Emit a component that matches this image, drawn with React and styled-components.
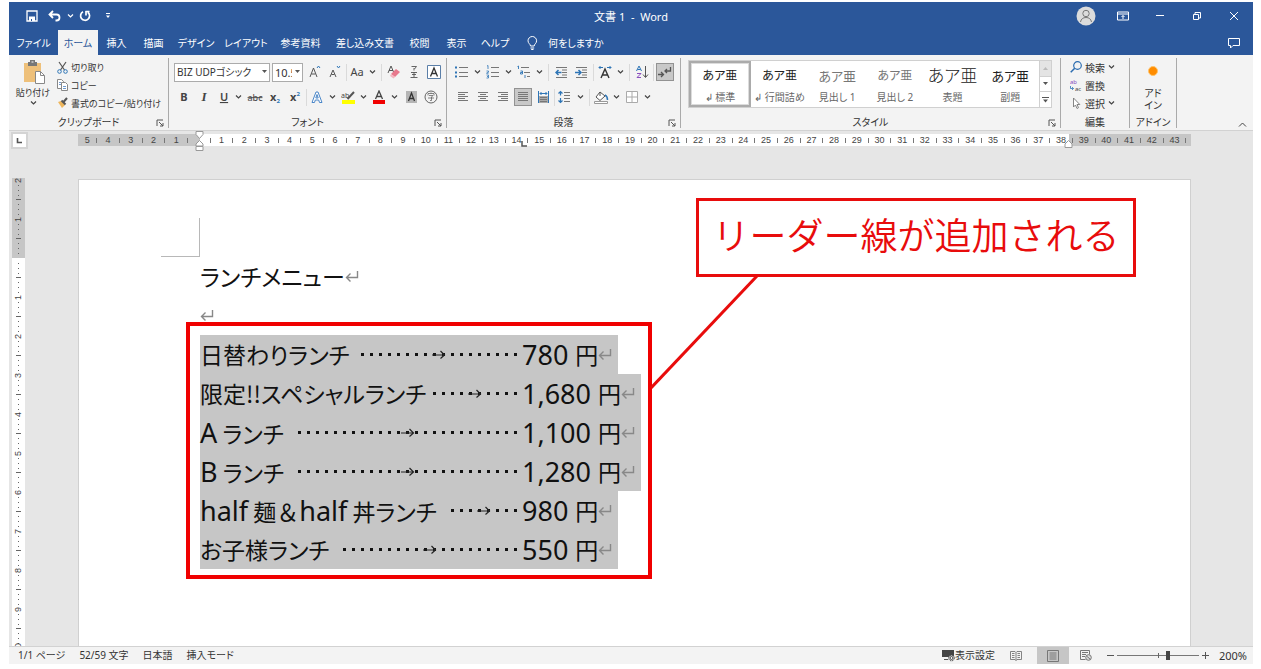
// src/App.jsx
import React from 'react';
import styled, { createGlobalStyle, css } from 'styled-components';

const GlobalStyle = createGlobalStyle`
  * {
    box-sizing: border-box;
  }

  body {
    margin: 0;
    background: #fff;
    color: #333;
    font-family: 'Noto Sans', 'Noto Sans CJK JP', sans-serif;
    font-size: 10px;
    font-feature-settings: 'palt';
  }

  button, select, input {
    font: inherit;
    font-feature-settings: inherit;
    color: inherit;
  }

  button {
    padding: 0;
    border: 0;
    background: none;
  }

  svg {
    display: block;
    flex: none;
  }
`;

/* Window */
const Window = styled.div`
  height: 100vh;
  padding: 2px 8px 5px 9px;
  display: flex;
  flex-direction: column;
`;

const TitleBar = styled.header`
  height: 28px;
  flex: none;
  display: grid;
  grid-template-columns: 1fr auto 1fr;
  align-items: center;
  background: #2b579a;
  color: #fff;
`;

const QuickAccess = styled.div`
  display: flex;
  align-items: center;
  padding-left: 14px;
`;

const QuickButton = styled.button`
  width: ${(p) => p.$w || 18}px;
  height: 20px;
  display: flex;
  align-items: center;
  justify-content: center;
`;

const DocTitle = styled.h1`
  margin: 0;
  font-size: 11px;
  font-weight: 400;
  white-space: pre;
`;

const WindowButtons = styled.div`
  display: flex;
  justify-content: flex-end;
  align-items: center;
  padding-right: 1px;
`;

const WindowButton = styled.button`
  width: 37px;
  height: 24px;
  display: flex;
  align-items: center;
  justify-content: center;
`;

/* Tabs */
const TabBar = styled.nav`
  height: 25px;
  flex: none;
  display: flex;
  background: #2b579a;
  color: #fff;
`;

const Tab = styled.button`
  width: ${(p) => p.$w}px;
  white-space: nowrap;
  text-align: center;
  ${(p) =>
    p.$active &&
    css`
      background: #f3f3f3;
      color: #2b579a;
    `}
`;

const TellMe = styled.button`
  display: flex;
  align-items: center;
  gap: 10px;
  margin-left: 12px;
`;

const CommentButton = styled.button`
  margin-left: auto;
  padding-right: 13px;
`;

/* Ribbon */
const RibbonBar = styled.div`
  height: 76px;
  flex: none;
  display: flex;
  padding: 3px 0 2px;
  background: #f3f3f3;
  border-bottom: 1px solid #d2d2d2;
`;

const Group = styled.section`
  width: ${(p) => p.$w}px;
  ${(p) => p.$grow && 'flex: 1;'}
  min-width: 0;
  display: flex;
  flex-direction: column;
  border-right: 1px solid #aaa;
`;

const GroupBody = styled.div`
  flex: 1;
  display: flex;
  flex-direction: ${(p) => (p.$column ? 'column' : 'row')};
  gap: ${(p) => p.$gap || 0}px;
  padding: ${(p) => p.$pad || '0'};
`;

const GroupFooter = styled.div`
  height: 11px;
  display: grid;
  grid-template-columns: ${(p) => (p.$launcher ? '12px 1fr 12px' : '1fr')};
  align-items: center;
  text-align: center;
  line-height: 11px;
  white-space: nowrap;
`;

const Launcher = styled.button`
  display: flex;
`;

const ToolRow = styled.div`
  height: 18px;
  display: flex;
  align-items: center;
`;

const Tool = styled.button`
  width: ${(p) => (p.$split ? 31 : 20)}px;
  height: 18px;
  display: flex;
  align-items: center;
  justify-content: ${(p) => (p.$split ? 'space-between' : 'center')};
  padding: ${(p) => (p.$split ? '0 3px 0 2px' : '0')};
  ${(p) =>
    p.$pressed &&
    css`
      width: 18px;
      margin: 0 1px;
      background: #c8c8c8;
      border: 1px solid #929292;
    `}
`;

const Divider = styled.span`
  width: 1px;
  height: 17px;
  margin: 0 ${(p) => p.$space || 1}px;
  background: #dadada;
`;

const Combo = styled.div`
  position: relative;
  width: ${(p) => p.$w}px;
  height: 19px;
  margin-right: 2px;

  select {
    width: 100%;
    height: 100%;
    padding: 0 10px 0 2px;
    border: 1px solid #ababab;
    border-radius: 0;
    background: #fff;
    font-size: ${(p) => p.$size}px;
    appearance: none;
  }

  svg {
    position: absolute;
    right: 3px;
    top: 7px;
    pointer-events: none;
  }
`;

const PasteButton = styled.button`
  width: 48px;
  display: flex;
  flex-direction: column;
  align-items: center;
  white-space: nowrap;
  font-size: 9px;
  line-height: 15px;
`;

const CommandList = styled.div`
  display: flex;
  flex-direction: column;
  font-size: ${(p) => p.$size || 10}px;
`;

const Command = styled.button`
  height: 18px;
  display: flex;
  align-items: center;
  gap: 3px;
  white-space: nowrap;
`;

const AddInButton = styled.button`
  flex: 1;
  display: flex;
  flex-direction: column;
  align-items: center;
  padding-top: 8px;
  line-height: 12px;
`;

const AddInDot = styled.span`
  width: 10px;
  height: 10px;
  margin-bottom: 11px;
  border: 1px solid #ffc46b;
  border-radius: 50%;
  background: #ff8c00;
`;

const CollapseButton = styled.button`
  width: 76px;
  display: flex;
  align-items: flex-end;
  justify-content: flex-end;
  padding: 0 6px 0 0;
`;

/* Style gallery */
const Gallery = styled.div`
  flex: 1;
  height: 48px;
  display: flex;
  border: 1px solid #d0d0d0;
  background: #fff;
`;

const StyleCard = styled.button`
  flex: 1;
  min-width: 0;
  display: flex;
  flex-direction: column;
  align-items: center;
  justify-content: space-between;
  padding: 4px 0 3px;
  white-space: nowrap;
  color: #666;
  ${(p) =>
    p.$selected &&
    css`
      padding: 2px 0 1px;
      border: 2px solid #ababab;
      box-shadow: inset 0 0 0 1px #dcdcdc;
    `}
`;

const Preview = styled.span`
  height: 22px;
  font-size: ${(p) => p.$size}px;
  font-weight: ${(p) => (p.$light ? 300 : 400)};
  line-height: 22px;
  color: ${(p) => p.$color || '#222'};
`;

const GalleryScroll = styled.div`
  width: 12px;
  display: flex;
  flex-direction: column;
  border-left: 1px solid #d0d0d0;

  button {
    flex: 1;
    display: flex;
    align-items: center;
    justify-content: center;
    border-bottom: 1px solid #d0d0d0;
  }

  button:first-child {
    background: #e4e4e4;
  }

  button:last-child {
    border-bottom: 0;
  }
`;

/* Workspace */
const Workspace = styled.main`
  flex: 1;
  min-height: 0;
  display: flex;
  flex-direction: column;
  background: #e6e6e6;
`;

const RulerRow = styled.div`
  height: 47px;
  flex: none;
  display: flex;
  align-items: flex-start;
  padding: 1px 62px 0 2px;
`;

const TabSelector = styled.button`
  width: 17px;
  height: 17px;
  display: flex;
  align-items: center;
  justify-content: center;
  border: 2px solid #d4d4d4;
  background: #fff;
`;

const HRuler = styled.div`
  position: relative;
  flex: 1;
  height: 12px;
  display: flex;
  margin: 2px 0 0 50px;
  padding-right: 5px;
  background: linear-gradient(to right, #c6c6c6 11%, #fff 11% 89%, #c6c6c6 89%);
  font: 9px/12px 'Liberation Sans', sans-serif;
  color: #444;
`;

const HCell = styled.span`
  flex: ${(p) => (p.$first ? 0.85 : 1)} 1 0;
  min-width: 0;
  display: flex;
  align-items: center;
  justify-content: flex-end;

  span {
    flex: 1;
    text-align: center;
  }

  &::after {
    content: '';
    width: 1px;
    height: 5px;
    background: #777;
  }
`;

const RulerMarker = styled.span`
  position: absolute;
  top: ${(p) => p.$top}px;
  left: ${(p) => p.$left};
`;

const Canvas = styled.div`
  flex: 1;
  min-height: 0;
  display: flex;
  overflow: hidden;
  padding: 0 62px 0 3px;
`;

const VRuler = styled.div`
  width: 13px;
  flex: none;
  margin-right: 53px;
  overflow: hidden;
  background: linear-gradient(to bottom, #c6c6c6 80px, #fff 80px);
  font: 9px/13px 'Liberation Sans', sans-serif;
  color: #444;
`;

const VCell = styled.div`
  height: 39px;
  display: flex;
  flex-direction: column;
`;

const VMark = styled.span`
  flex: 1;
  min-height: 0;
  display: flex;
  align-items: center;
  justify-content: center;

  b {
    font-weight: 400;
    writing-mode: vertical-rl;
    transform: rotate(180deg);
  }

  i {
    width: ${(p) => (p.$long ? 5 : 1)}px;
    height: 1px;
    background: #666;
  }
`;

const Page = styled.article`
  position: relative;
  flex: 1;
  min-width: 0;
  margin-top: 1px;
  padding: 77px 0 0 121px;
  border: 1px solid #d0d0d0;
  border-bottom: 0;
  background: #fff;
  color: #111;
  font-family: 'Noto Sans CJK JP', sans-serif;
  font-size: 23px;
`;

const MarginCorner = styled.span`
  position: absolute;
  top: 38px;
  left: 82px;
  width: 39px;
  height: 39px;
  border-right: 1px solid #b8b8b8;
  border-bottom: 1px solid #b8b8b8;
`;

const Paragraph = styled.p`
  width: fit-content;
  height: 39px;
  margin: 0;
  display: flex;
  align-items: center;
  line-height: 39px;
  white-space: nowrap;
  ${(p) => p.$selected && 'padding-right: 6px; background: #c6c6c6;'}
`;

const TabbedText = styled.span`
  width: 322px;
  display: flex;
  align-items: center;
  justify-content: space-between;
`;

const Latin = styled.span`
  font-family: 'Noto Sans', sans-serif;
  font-size: 27px;
`;

const FullWidth = styled.span`
  font-feature-settings: normal;
`;

const Leader = styled.span`
  width: ${(p) => p.$dots * 9}px;
  height: 9px;
  margin-right: 2px;
  display: flex;
  align-items: center;
  justify-content: center;
  background: radial-gradient(circle, #111 0 1.5px, transparent 2px) 0 0 / 9px 9px;
`;

const Price = styled.span`
  display: flex;
  gap: 7px;
`;

/* Annotations over the page */
const Highlight = styled.div`
  position: absolute;
  top: 142px;
  left: 107px;
  width: 466px;
  height: 257px;
  border: 4px solid #f00000;
`;

const Callout = styled.div`
  position: absolute;
  top: 18px;
  left: 617px;
  width: 440px;
  height: 79px;
  border: 3px solid #e80c0c;
  background: #fff;
  color: #e80c0c;
  font-size: 37px;
  font-weight: 350;
  font-feature-settings: normal;
  line-height: 67px;
  text-align: center;
  white-space: nowrap;
`;

const Connector = styled.svg`
  position: absolute;
  top: 96px;
  left: 571px;
`;

/* Status bar */
const StatusBar = styled.footer`
  height: 18px;
  flex: none;
  display: flex;
  align-items: center;
  justify-content: space-between;
  padding: 0 6px 0 9px;
  border-top: 1px solid #d2d2d2;
  background: #f3f3f3;
  line-height: 17px;
`;

const StatusItems = styled.div`
  height: 100%;
  display: flex;
  align-items: center;
  gap: ${(p) => p.$gap || 0}px;
`;

const StatusButton = styled.button`
  height: 100%;
  display: flex;
  align-items: center;
  justify-content: center;
  width: ${(p) => (p.$w ? `${p.$w}px` : 'auto')};
  white-space: nowrap;
  ${(p) => p.$active && 'background: #c6c6c6;'}
`;

const ZoomSlider = styled.input`
  width: 82px;
  height: 14px;
  margin: 0;
  appearance: none;
  background:
    linear-gradient(#666, #666) 41px 50% / 1px 5px no-repeat,
    linear-gradient(#777, #777) 0 50% / 100% 1px no-repeat;

  &::-webkit-slider-thumb {
    appearance: none;
    width: 4px;
    height: 9px;
    background: #444;
  }
`;

const ZoomLevel = styled.output`
  width: 36px;
  text-align: right;
  font-size: 11px;
`;

/* Icons */
const Icon = ({ w = 14, h = w, children }) => (
  <svg width={w} height={h} viewBox={`0 0 ${w} ${h}`} fill="none" stroke="#555" aria-hidden="true">
    {children}
  </svg>
);

const Chevron = ({ color = '#444' }) => (
  <Icon w={7} h={6}>
    <path d="M1 1.500L3.500 4 6 1.500" stroke={color} strokeWidth="1.200" />
  </Icon>
);

const Caret = () => (
  <Icon w={5} h={4}>
    <path d="M0 0h5L2.500 3z" fill="#555" stroke="none" />
  </Icon>
);

const Glyph = ({ children, w = 14, size = 12, ...rest }) => (
  <Icon w={w} h={14}>
    <text
      x={w / 2}
      y="11"
      textAnchor="middle"
      fontSize={size}
      fontFamily="Noto Sans, Noto Sans CJK JP, sans-serif"
      fill="#444"
      stroke="none"
      {...rest}
    >
      {children}
    </text>
  </Icon>
);

const LauncherIcon = () => (
  <Icon w={8} h={8}>
    <path d="M1 7V1h6M3 3l4 4M7 4v3H4" stroke="#555" />
  </Icon>
);

const LinesIcon = ({ rows }) => (
  <Icon w={12} h={12}>
    {rows.map(([x1, x2], i) => (
      <path key={i} d={`M${x1} ${1.5 + i * 2}H${x2}`} stroke="#777" />
    ))}
  </Icon>
);

const BulletsIcon = () => (
  <Icon>
    <path d="M4 2.500h9M4 7.500h9M4 11.500h9" stroke="#777" />
    <path d="M0 2.500h2M0 7.500h2M0 11.500h2" stroke="#2e75b6" strokeWidth="2" />
  </Icon>
);

const NumberingIcon = () => (
  <Icon>
    <path d="M5 2.500h8M5 7.500h8M5 11.500h8" stroke="#777" />
    <path d="M1 1l1-.5V4M.5 6h2v1.200l-2 1h2M.5 10h2v3h-2M1 11.500h1" stroke="#2e75b6" strokeWidth=".8" />
  </Icon>
);

const MultilevelIcon = () => (
  <Icon>
    <path d="M4 2.500h8M7 7.500h6M10 11.500h3" stroke="#777" />
    <path d="M.5 1.500l1-.5V4M3.500 6h2v3h-2V7.500h2M8 10v3" stroke="#2e75b6" strokeWidth=".9" />
  </Icon>
);

const IndentIcon = ({ out }) => (
  <Icon w={13} h={13}>
    <path d="M1 1.500h11M7 4h5M7 6.500h5M7 9h5M1 11.500h11" stroke="#777" />
    <path d={out ? 'M6.500 6.500H1M3.500 4L1 6.500 3.500 9' : 'M0 6.500h5.500M3.500 4L6 6.500 3.500 9'} stroke="#2e75b6" strokeWidth="1.500" />
  </Icon>
);

const ReturnMark = () => (
  <Icon w={14} h={14}>
    <path d="M12.500 1v6.500H1.500M5.500 3.500l-4 4 4 4" stroke="#888" strokeWidth="1.400" />
  </Icon>
);

const TabArrow = () => (
  <Icon w={14} h={9}>
    <path d="M0 5h12.500M8.500 1l4 4-4 3.500" stroke="#222" strokeWidth="1.200" />
  </Icon>
);

/* Data */
const tabs = [
  { label: 'ファイル', w: 49 },
  { label: 'ホーム', w: 40, active: true },
  { label: '挿入', w: 37 },
  { label: '描画', w: 37 },
  { label: 'デザイン', w: 48 },
  { label: 'レイアウト', w: 52 },
  { label: '参考資料', w: 57 },
  { label: '差し込み文書', w: 72 },
  { label: '校閲', w: 37 },
  { label: '表示', w: 37 },
  { label: 'ヘルプ', w: 40 },
];

const styles = [
  { name: '↲ 標準', size: 12, selected: true },
  { name: '↲ 行間詰め', size: 12 },
  { name: '見出し 1', size: 13, color: '#777' },
  { name: '見出し 2', size: 12, color: '#777' },
  { name: '表題', size: 17, light: true },
  { name: '副題', size: 13 },
];

const menu = [
  { name: '日替わりランチ', dots: 18, price: '780' },
  { name: '限定!!スペシャルランチ', dots: 10, price: '1,680' },
  { name: <><Latin>A</Latin> ランチ</>, dots: 25, price: '1,100' },
  { name: <><Latin>B</Latin> ランチ</>, dots: 25, price: '1,280' },
  { name: <><Latin>half</Latin> 麺<FullWidth>＆</FullWidth><Latin>half</Latin> 丼ランチ</>, dots: 8, price: '980' },
  { name: 'お子様ランチ', dots: 20, price: '550' },
];

const hNumbers = Array.from({ length: 49 }, (_, i) => i - 5);
const vNumbers = [2, 1, '', 1, 2, 3, 4, 5, 6, 7, 8, 9, 10];

const Footer = ({ label, launcher }) => (
  <GroupFooter $launcher={launcher}>
    {launcher && <span />}
    <span>{label}</span>
    {launcher && (
      <Launcher aria-label={label}>
        <LauncherIcon />
      </Launcher>
    )}
  </GroupFooter>
);

const Split = ({ label, children }) => (
  <Tool $split aria-label={label}>
    {children}
    <Chevron />
  </Tool>
);

const ClipboardGroup = () => (
  <Group $w={160}>
    <GroupBody>
      <PasteButton>
        <Icon w={24} h={27}>
          <path d="M3 5h17v19H3z" fill="#eec07a" stroke="none" />
          <path d="M7 4h2V2h5v2h2v4H7z" fill="#777" stroke="none" />
          <path d="M10.500 4h2" stroke="#fff" />
          <path d="M14.500 13.500h5l4 4v8h-9z" fill="#fff" stroke="#888" />
          <path d="M19.500 13.500v4h4" stroke="#888" />
        </Icon>
        <span>貼り付け</span>
        <Chevron />
      </PasteButton>
      <CommandList $size={9}>
        <Command>
          <Icon w={11} h={13}>
            <path d="M2 1l5.500 8M9 1L3.500 9" stroke="#555" strokeWidth="1.200" />
            <circle cx="2.500" cy="10.500" r="1.800" stroke="#2e75b6" />
            <circle cx="8.500" cy="10.500" r="1.800" stroke="#2e75b6" />
          </Icon>
          切り取り
        </Command>
        <Command>
          <Icon w={11} h={12}>
            <path d="M.5.500h4l2 2v7h-6z" fill="#fff" stroke="#888" />
            <path d="M4.500 3.500h4l2 2v6h-6z" fill="#fff" stroke="#888" />
            <path d="M6 7.500h3M6 9.500h3M2 3.500h2M2 5.500h2" stroke="#6f9bd1" />
          </Icon>
          コピー
        </Command>
        <Command>
          <Icon w={11} h={12}>
            <path d="M1 5l3-1 4 4-3 3z" fill="#eeb65c" stroke="none" />
            <path d="M4.500 3.500l4 4" stroke="#555" strokeWidth="2" />
            <path d="M6.500 5l3.500-4" stroke="#555" strokeWidth="2" />
          </Icon>
          書式のコピー/貼り付け
        </Command>
      </CommandList>
    </GroupBody>
    <Footer label="クリップボード" launcher />
  </Group>
);

const FontGroup = () => (
  <Group $w={278}>
    <GroupBody $column $gap={7} $pad="5px 0 0 5px">
      <ToolRow>
        <Combo $w={96} $size={10}>
          <select aria-label="フォント">
            <option>BIZ UDPゴシック</option>
          </select>
          <Caret />
        </Combo>
        <Combo $w={31} $size={11}>
          <select aria-label="フォント サイズ">
            <option>10.5</option>
          </select>
          <Caret />
        </Combo>
        <Tool aria-label="拡大">
          <Icon>
            <path d="M2 12l3.500-9L9 12M3.500 9h4" />
            <path d="M9 3l1.500-2L12 3" stroke="#2e75b6" />
          </Icon>
        </Tool>
        <Tool aria-label="縮小">
          <Icon>
            <path d="M2 12l3-7 3 7M3.500 9.500h3" />
            <path d="M9 1l1.500 2L12 1" stroke="#2e75b6" />
          </Icon>
        </Tool>
        <Divider />
        <Split label="文字種の変換">
          <Glyph size={11}>Aa</Glyph>
        </Split>
        <Divider $space={2} />
        <Tool aria-label="書式のクリア">
          <Icon>
            <path d="M1 8l3-7 3 7M2 5.500h4" />
            <path d="M4 9l5-5 4 3-5 5z" fill="#e8788c" stroke="none" />
            <path d="M4 9l4 3-1.500 1.500L3 11z" fill="#f4b5bf" stroke="none" />
          </Icon>
        </Tool>
        <Tool aria-label="ルビ">
          <Icon>
            <path d="M4.500 1.500h5L7.500 4M7 3v2.500M4 7.500h6M5 9.500h4M3.500 12.500h7M7 7v5" strokeWidth=".9" />
          </Icon>
        </Tool>
        <Tool aria-label="囲み線">
          <Icon>
            <path d="M.5.500h13v13H.5z" fill="#fff" stroke="#5b7fa8" />
            <path d="M3.500 11.500L7 3l3.500 8.500M5 8.500h4" stroke="#333" strokeWidth="1.300" />
          </Icon>
        </Tool>
      </ToolRow>
      <ToolRow>
        <Tool aria-label="太字"><Glyph fontWeight="700" size={11}>B</Glyph></Tool>
        <Tool aria-label="斜体"><Glyph fontWeight="700" fontStyle="italic" fontFamily="Liberation Serif" size={13}>I</Glyph></Tool>
        <Split label="下線"><Glyph fontWeight="600" textDecoration="underline" w={16} size={11}>U</Glyph></Split>
        <Tool aria-label="取り消し線"><Glyph textDecoration="line-through" size={9} w={16}>abc</Glyph></Tool>
        <Tool aria-label="下付き">
          <Glyph fontWeight="700" size={11}>x<tspan fontSize="6" dy="2" fill="#2e75b6">2</tspan></Glyph>
        </Tool>
        <Tool aria-label="上付き">
          <Glyph fontWeight="700" size={11}>x<tspan fontSize="6" dy="-5" fill="#2e75b6">2</tspan></Glyph>
        </Tool>
        <Divider />
        <Split label="文字の効果">
          <Icon>
            <path d="M2 12.500L6 2h2l4 10.500h-2.500l-.8-2.500H5.300l-.8 2.500zM7 4.500L5.800 8h2.400z" fill="#fff" stroke="#4a86c8" />
          </Icon>
        </Split>
        <Split label="蛍光ペン">
          <Icon w={15}>
            <text x="0" y="8" fontSize="7" fontFamily="Noto Sans" fill="#444" stroke="none">ab</text>
            <path d="M13 2L6.500 9" strokeWidth="2" />
            <path d="M1 10h13v4H1z" fill="#ffff00" stroke="none" />
          </Icon>
        </Split>
        <Split label="フォントの色">
          <Icon>
            <path d="M3.500 9L7 1l3.500 8M5 6.500h4" stroke="#444" strokeWidth="1.300" />
            <path d="M1 10h12v4H1z" fill="#f00000" stroke="none" />
          </Icon>
        </Split>
        <Tool aria-label="網かけ">
          <Icon>
            <path d="M2 1h11v12H2z" fill="#b5b5b5" stroke="none" />
            <path d="M4.500 11l3-8 3 8M5.500 8.500h4" stroke="#333" strokeWidth="1.300" />
          </Icon>
        </Tool>
        <Tool aria-label="囲い文字">
          <Icon>
            <circle cx="7" cy="7" r="6" strokeWidth=".9" />
            <path d="M7 2.500v1M4 5.500v-2h6v2M5 5.500h4L7.500 7v3.500H6M4 8h6" strokeWidth=".7" />
          </Icon>
        </Tool>
      </ToolRow>
    </GroupBody>
    <Footer label="フォント" launcher />
  </Group>
);

const ParagraphGroup = () => (
  <Group $w={234}>
    <GroupBody $column $gap={7} $pad="5px 0 0 6px">
      <ToolRow>
        <Split label="箇条書き"><BulletsIcon /></Split>
        <Split label="段落番号"><NumberingIcon /></Split>
        <Split label="アウトライン"><MultilevelIcon /></Split>
        <Divider $space={2} />
        <Tool aria-label="インデントを減らす"><IndentIcon out /></Tool>
        <Tool aria-label="インデントを増やす"><IndentIcon /></Tool>
        <Divider $space={2} />
        <Split label="拡張書式">
          <Icon>
            <path d="M3 13L7 4l4 9M4.500 10h5" stroke="#333" strokeWidth="1.400" />
            <path d="M5 2.500H1M2.500 1L1 2.500 2.500 4M9 2.500h4M11.500 1L13 2.500 11.500 4" stroke="#2e75b6" />
          </Icon>
        </Split>
        <Divider $space={2} />
        <Tool aria-label="並べ替え">
          <Icon>
            <path d="M1.500 6L4 1l2.500 5M2.500 4.500h3" stroke="#2e75b6" />
            <path d="M2 8.500h4L2 12.500h4" stroke="#8a4fbf" />
            <path d="M10.500 1v11M8 9.500l2.500 3 2.500-3" />
          </Icon>
        </Tool>
        <Divider />
        <Tool $pressed aria-label="編集記号の表示">
          <Icon>
            <path d="M0 9.500h5M3 7l2.500 2.500L3 12" strokeWidth="1.300" />
            <path d="M12.500 2v4H7M9 4L7 6l2 2" strokeWidth="1.300" />
          </Icon>
        </Tool>
      </ToolRow>
      <ToolRow>
        <Tool aria-label="左揃え"><LinesIcon rows={[[1, 11], [1, 8], [1, 11], [1, 8], [1, 11]]} /></Tool>
        <Tool aria-label="中央揃え"><LinesIcon rows={[[1, 11], [3, 9], [1, 11], [3, 9], [1, 11]]} /></Tool>
        <Tool aria-label="右揃え"><LinesIcon rows={[[1, 11], [4, 11], [1, 11], [4, 11], [1, 11]]} /></Tool>
        <Tool $pressed aria-label="両端揃え"><LinesIcon rows={[[1, 11], [1, 11], [1, 11], [1, 11], [1, 11]]} /></Tool>
        <Tool aria-label="均等割り付け">
          <Icon w={13} h={14}>
            <path d="M1 6h11v7H1z" fill="#aaa" stroke="none" />
            <path d="M1.500 1v12M11.500 1v12" stroke="#2e75b6" />
            <path d="M3 3.500h7M4.500 2L3 3.500 4.500 5M8.500 2L10 3.500 8.500 5" stroke="#2e75b6" />
            <path d="M3 7.500h7M3 9.500h7M3 11.500h7" stroke="#777" />
          </Icon>
        </Tool>
        <Divider />
        <Split label="行間">
          <Icon>
            <path d="M6 2.500h6M6 5.500h6M6 8.500h6M6 11.500h6" stroke="#777" />
            <path d="M2.500 1.500v4M.5 3.500l2-2 2 2M2.500 8v4.500M.5 10.500l2 2 2-2" stroke="#2e75b6" strokeWidth="1.200" />
          </Icon>
        </Split>
        <Divider $space={2} />
        <Split label="塗りつぶし">
          <Icon w={15}>
            <path d="M6 2l5 4-5 4.500L2 7zM6 2v4" fill="#fff" />
            <path d="M11 5c2 1 2.500 3 2.500 5" stroke="#2e75b6" strokeWidth="1.500" />
            <path d="M.5 11.500h13v2H.5z" fill="#fff" stroke="#999" />
          </Icon>
        </Split>
        <Split label="罫線">
          <Icon>
            <path d="M1.500 1.500h11v11h-11zM7 1.500v11M1.500 7h11" fill="#fff" stroke="#aaa" />
          </Icon>
        </Split>
      </ToolRow>
    </GroupBody>
    <Footer label="段落" launcher />
  </Group>
);

const StylesGroup = () => (
  <Group $grow>
    <GroupBody $pad="2px 8px 0 7px">
      <Gallery>
        {styles.map((s) => (
          <StyleCard key={s.name} $selected={s.selected}>
            <Preview $size={s.size} $color={s.color} $light={s.light}>あア亜</Preview>
            <span>{s.name}</span>
          </StyleCard>
        ))}
        <GalleryScroll>
          <button aria-label="上へ"><Icon w={5} h={3}><path d="M0 3h5L2.500 0z" fill="#bbb" stroke="none" /></Icon></button>
          <button aria-label="下へ"><Caret /></button>
          <button aria-label="その他"><Icon w={7} h={6}><path d="M0 .5h7" /><path d="M1 2.500h5L3.500 5.500z" fill="#555" stroke="none" /></Icon></button>
        </GalleryScroll>
      </Gallery>
    </GroupBody>
    <Footer label="スタイル" launcher />
  </Group>
);

const EditGroup = () => (
  <Group $w={69}>
    <GroupBody $pad="0 0 0 9px">
      <CommandList>
        <Command>
          <Icon w={12} h={12}>
            <circle cx="7.500" cy="4.500" r="3.800" stroke="#2b6cb0" strokeWidth="1.200" />
            <path d="M4.700 7.300L.7 11.300" stroke="#2b6cb0" strokeWidth="1.500" />
          </Icon>
          検索
          <Chevron />
        </Command>
        <Command>
          <Icon w={12} h={16}>
            <text x="0" y="7" fontSize="6" fontFamily="Noto Sans" fill="#8a4fbf" stroke="none">ab</text>
            <text x="5" y="14" fontSize="6" fontFamily="Noto Sans" fill="#444" stroke="none">ac</text>
            <path d="M.5 9v2.500h3M2 10l1.500 1.500L2 13" stroke="#2e75b6" strokeWidth=".8" />
          </Icon>
          置換
        </Command>
        <Command>
          <Icon w={12} h={12}>
            <path d="M3.500 1v9l2-2 1.500 3.500 1.500-.8L7 7.500h2.800z" fill="#fff" stroke="#777" strokeWidth=".9" />
          </Icon>
          選択
          <Chevron />
        </Command>
      </CommandList>
    </GroupBody>
    <Footer label="編集" />
  </Group>
);

const App = () => (
  <>
    <GlobalStyle />
    <Window>
      <TitleBar>
        <QuickAccess>
          <QuickButton aria-label="上書き保存">
            <Icon w={12} h={12}>
              <path d="M1 1h10v10H1z" stroke="#fff" strokeWidth="1.300" />
              <path d="M3 6.500h6V11H3z" fill="#fff" stroke="none" />
              <path d="M5.500 9v2" stroke="#2b579a" />
            </Icon>
          </QuickButton>
          <QuickButton $w={26} aria-label="元に戻す">
            <Icon w={13} h={12}>
              <path d="M5 1L1.500 4.500 5 8M2 4.500h6.500a3 3 0 0 1 0 6H7.500" stroke="#fff" strokeWidth="1.800" />
            </Icon>
          </QuickButton>
          <QuickButton $w={7} aria-label="履歴"><Chevron color="#fff" /></QuickButton>
          <QuickButton $w={22} aria-label="やり直し">
            <Icon w={12} h={12}>
              <path d="M4 1.800A4.500 4.500 0 1 0 8.800 2.200M6.500 1.500H10.500M7 1v4.500" stroke="#fff" strokeWidth="1.700" />
            </Icon>
          </QuickButton>
          <QuickButton $w={24} aria-label="カスタマイズ">
            <Icon w={6} h={6}>
              <path d="M1 .5h4" stroke="#fff" />
              <path d="M1 2.500h4L3 5z" fill="#fff" stroke="none" />
            </Icon>
          </QuickButton>
        </QuickAccess>
        <DocTitle>{'文書 1  -  Word'}</DocTitle>
        <WindowButtons>
          <WindowButton aria-label="アカウント">
            <Icon w={20}>
              <circle cx="10" cy="10" r="9.500" fill="#dcdcdc" stroke="none" />
              <circle cx="10" cy="7.500" r="3.200" stroke="#777" />
              <path d="M4.500 16c.5-3 2.500-4.500 5.500-4.500s5 1.500 5.500 4.500" stroke="#777" />
            </Icon>
          </WindowButton>
          <WindowButton aria-label="リボンの表示オプション">
            <Icon w={12} h={10}>
              <path d="M.5 1h11v8H.5zM.5 3h11" stroke="#fff" />
              <path d="M6 8V4.500M4.500 6L6 4.500 7.500 6" stroke="#fff" />
            </Icon>
          </WindowButton>
          <WindowButton aria-label="最小化"><Icon w={10}><path d="M1 4.500h8" stroke="#fff" /></Icon></WindowButton>
          <WindowButton aria-label="元のサイズに戻す">
            <Icon w={10}>
              <path d="M1.500 3.500h5v5h-5zM3 3.500v-2h5.500V7H7" stroke="#fff" />
            </Icon>
          </WindowButton>
          <WindowButton aria-label="閉じる"><Icon w={10}><path d="M1 1l8 8M9 1L1 9" stroke="#fff" /></Icon></WindowButton>
        </WindowButtons>
      </TitleBar>

      <TabBar>
        {tabs.map((t) => (
          <Tab key={t.label} $w={t.w} $active={t.active}>{t.label}</Tab>
        ))}
        <TellMe>
          <Icon w={11} h={14}>
            <path d="M3.500 10C3.500 8 1 7.500 1 4.800a4.300 4.300 0 0 1 8.600 0C9.600 7.500 7.200 8 7.200 10zM3.500 12h3.700M4.200 13.500h2.300" stroke="#fff" />
          </Icon>
          何をしますか
        </TellMe>
        <CommentButton aria-label="コメント">
          <Icon w={12} h={12}>
            <path d="M.5 1.500h11v7H5L2.500 11V8.500h-2z" stroke="#fff" />
          </Icon>
        </CommentButton>
      </TabBar>

      <RibbonBar>
        <ClipboardGroup />
        <FontGroup />
        <ParagraphGroup />
        <StylesGroup />
        <EditGroup />
        <Group $w={47}>
          <GroupBody>
            <AddInButton>
              <AddInDot />
              <span>アド</span>
              <span>イン</span>
            </AddInButton>
          </GroupBody>
          <Footer label="アドイン" />
        </Group>
        <CollapseButton aria-label="リボンを折りたたむ">
          <Icon w={9} h={7}><path d="M1 5.500L4.500 2 8 5.500" stroke="#444" /></Icon>
        </CollapseButton>
      </RibbonBar>

      <Workspace>
        <RulerRow>
          <TabSelector aria-label="タブの種類">
            <Icon w={7} h={7}><path d="M1.500 1v4.500H6" strokeWidth="1.600" /></Icon>
          </TabSelector>
          <HRuler>
            {hNumbers.map((n) => (
              <HCell key={n} $first={n === -5}>
                <span>{n === 0 ? '' : Math.abs(n)}</span>
              </HCell>
            ))}
            <RulerMarker $top={-3} $left="calc(11% - 5px)">
              <Icon w={9} h={20}>
                <path d="M1 .5h7v3L4.500 7.500 1 3.500zM4.500 9.500L8 13v2H1v-2zM1 15.500h7v4H1z" fill="#fff" stroke="#999" />
              </Icon>
            </RulerMarker>
            <RulerMarker $top={7} $left="calc(40% - 2px)">
              <Icon w={6} h={6}><path d="M1 0v5h5" strokeWidth="1.500" /></Icon>
            </RulerMarker>
            <RulerMarker $top={6} $left="calc(89% - 5px)">
              <Icon w={9} h={8}><path d="M4.500.5L8 4v3.500H1V4z" fill="#fff" stroke="#999" /></Icon>
            </RulerMarker>
          </HRuler>
        </RulerRow>
        <Canvas>
          <VRuler>
            {vNumbers.map((n, i) => (
              <VCell key={i}>
                <VMark><b>{n}</b></VMark>
                {[1, 2, 3, 4, 5, 6, 7].map((m) => (
                  <VMark key={m} $long={m === 4}><i /></VMark>
                ))}
              </VCell>
            ))}
          </VRuler>
          <Page>
            <MarginCorner />
            <Paragraph>ランチメニュー<ReturnMark /></Paragraph>
            <Paragraph><ReturnMark /></Paragraph>
            {menu.map((m) => (
              <Paragraph key={m.price} $selected>
                <TabbedText>
                  <span>{m.name}</span>
                  <Leader $dots={m.dots}><TabArrow /></Leader>
                </TabbedText>
                <Price>
                  <Latin>{m.price}</Latin>
                  円
                </Price>
                <ReturnMark />
              </Paragraph>
            ))}
            <Highlight />
            <Connector width="112" height="114" fill="none" stroke="#e80c0c" strokeWidth="3">
              <path d="M1 112L107 0" />
            </Connector>
            <Callout>リーダー線が追加される</Callout>
          </Page>
        </Canvas>
      </Workspace>

      <StatusBar>
        <StatusItems $gap={14}>
          <span>1/1 ページ</span>
          <span>52/59 文字</span>
          <StatusButton>日本語</StatusButton>
          <StatusButton>挿入モード</StatusButton>
        </StatusItems>
        <StatusItems>
          <StatusButton>
            <Icon w={13} h={13}>
              <path d="M0 1h12v7H0z" fill="#444" stroke="none" />
              <path d="M2 10.500h4" />
              <circle cx="9.500" cy="9" r="2.800" fill="#f3f3f3" stroke="#444" strokeDasharray="1.500 .7" />
              <circle cx="9.500" cy="9" r="1.500" stroke="#444" />
            </Icon>
            表示設定
          </StatusButton>
          <StatusButton $w={42} aria-label="閲覧モード">
            <Icon w={12} h={11}>
              <path d="M.5 1.500h4.500l1 1 1-1h4.500v8H7l-1 1-1-1H.5zM6 2.500v8M2 3.500h2.500M2 5.500h2.500M2 7.500h2.500M7.500 3.500H10M7.500 5.500H10M7.500 7.500H10" stroke="#777" strokeWidth=".9" />
            </Icon>
          </StatusButton>
          <StatusButton $w={32} $active aria-label="印刷レイアウト">
            <Icon w={12} h={12}>
              <path d="M.5.500h11v11H.5zM2.500 3h7M2.500 5h7M2.500 7h7M2.500 9h7" stroke="#777" />
            </Icon>
          </StatusButton>
          <StatusButton $w={34} aria-label="Web レイアウト">
            <Icon w={12} h={11}>
              <path d="M5.500 9.500h-5v-9h9v4M2 2.500h6M2 4.500h4M2 6.500h3" stroke="#777" />
              <circle cx="8.500" cy="7.500" r="2.800" fill="#ddd" stroke="#777" />
              <path d="M6.500 6l4 3.500" stroke="#777" />
            </Icon>
          </StatusButton>
          <StatusButton $w={14} aria-label="縮小"><Icon w={7}><path d="M0 3.500h7" /></Icon></StatusButton>
          <ZoomSlider type="range" min="0" max="100" defaultValue="63" aria-label="ズーム" />
          <StatusButton $w={12} aria-label="拡大"><Icon w={7}><path d="M0 3.500h7M3.500 0v7" /></Icon></StatusButton>
          <ZoomLevel>200%</ZoomLevel>
        </StatusItems>
      </StatusBar>
    </Window>
  </>
);

export default App;
